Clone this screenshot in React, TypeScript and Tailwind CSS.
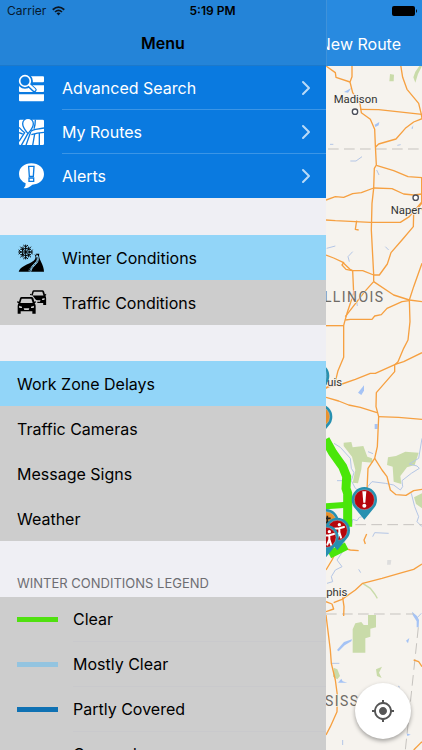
import { useState } from "react";
import { ChevronRight } from "lucide-react";
import { MdMyLocation } from "react-icons/md";

const roads = [
  "M12 18L40 38 42 52 84 66",
  "M90 15V50L84 66 92 98 114 130 118 158 145 178 158 208 160 256 163 315 157 325 155 385 150 430 148 510 155 643V665",
  "M114 148L170 149 300 163",
  "M236 15L242 52 255 88 290 130 298 163 300 176 275 186 250 205 222 237 170 252 160 262",
  "M163 316L215 332 258 350 300 353",
  "M12 420L40 410 65 412 92 401 118 398 155 384 210 386 245 402 275 405 300 402",
  "M12 480L40 482 145 487 235 487 262 470 300 425",
  "M104 482L100 508 110 510",
  "M299 352V430L275 460 274 500 240 540 207 578 196 612 172 645 155 645",
  "M12 585L35 594 65 608 60 615 72 628 90 632 122 632 155 645",
  "M62 607L84 628 92 632 95 700 75 760 68 785 65 797V892L48 932 40 965 12 985",
  "M155 665L128 695 70 770",
  "M155 665L215 705 262 720 300 725",
  "M12 797H66",
  "M70 780L85 778 150 778 158 768 178 764 195 745 240 725 262 722",
  "M300 610L275 680 262 720 264 785 258 840 245 865 228 905 218 915V935L163 998 162 1040 170 1070 166 1160 158 1195 138 1225 135 1290",
  "M300 878L245 905 220 913 160 940 145 940 100 958 60 972 12 982",
  "M12 1012L50 1023 80 1035 115 1042 165 1058",
  "M168 1070L230 1072 300 1078",
  "M158 1195L180 1230 195 1250 205 1290 222 1304 252 1306 275 1292 300 1288",
  "M68 1465L85 1470 110 1472",
  "M134 1422L126 1440 130 1452",
  "M12 1530L30 1500 36 1488",
  "M300 1512L275 1528 240 1538 180 1555 122 1570 100 1590 60 1618 35 1628",
  "M12 1625L30 1632 35 1647 12 1655",
  "M62 1612L66 1640 65 1668",
  "M12 1665L25 1770 28 1810 40 1860 46 1905 45 1955 25 2000 12 2025",
  "M275 1800L290 1805 300 1820",
  "M275 2070L300 2045",
];

const parks = [
  "M204 42L216 44 215 64 202 64Z",
  "M274 52L280 35 292 18 300 18 288 42 280 68Z",
  "M65 1148L88 1146 92 1162 124 1158 136 1190 150 1195 152 1208 120 1205 118 1228 108 1270 92 1268 100 1230 90 1190 65 1158Z",
  "M198 1192L222 1188 250 1175 290 1178 278 1215 255 1222 235 1248 238 1272 215 1265 212 1220 195 1215Z",
  "M276 1312L300 1300V1345L282 1332Z",
  "M92 1708L100 1690 118 1686 125 1695 138 1695V1665H162V1702L145 1706V1730L130 1735V1778H92Z",
  "M35 1823L46 1828 54 1848 46 1858 33 1850Z",
  "M162 1828L180 1820 171 1838 179 1854 165 1848Z",
];

const lakes = [
  "M66 96L88 84 78 98Z",
  "M158 194L172 186 170 196 160 201Z",
  "M268 205L274 196 272 207Z",
  "M108 998L126 976 126 992 118 1005Z",
  "M158 1092H167V1107H158Z",
  "M45 1770L66 1746 90 1738 88 1744 68 1756 50 1774Z",
  "M48 1868L58 1856 62 1864 76 1868Z",
  "M252 1742L262 1734 258 1750Z",
  "M254 2020L266 2024 256 2028Z",
  "M270 1655L285 1668 291 1680 290 1702 284 1702 284 1684 272 1665Z",
];

const rivers = [
  "M14 565L40 558",
  "M92 575L78 590 82 605",
  "M190 560L200 570",
  "M24 253H34M226 256L236 254",
  "M85 303L102 303 120 290",
  "M164 330L171 345",
  "M104 722L106 738",
  "M36 1150L55 1162 85 1195 88 1225 96 1238 88 1262 100 1285 120 1300 150 1265 190 1270 215 1275 235 1290 242 1280 240 1262 268 1240 292 1225 285 1218 262 1212 290 1195 300 1135",
  "M45 1262H62M138 1175L153 1181",
  "M268 1300L278 1340 290 1370 285 1385 300 1400",
  "M88 1400L92 1378 105 1382 112 1372 130 1368",
  "M62 1475L45 1500 60 1520 40 1530 28 1550 32 1565 15 1570",
  "M152 1430L158 1418 200 1420M110 1528L116 1538",
  "M30 1810H52M284 1675L298 1660M62 2040V2055M228 1878L234 1882",
];

function Pin({ x, y, fill, children }: { x: number; y: number; fill: string; children?: React.ReactNode }) {
  return (
    <g transform={`translate(${x} ${y})`}>
      <path d="M0 60L-27 27A38 38 0 1 1 27 27Z" fill="#2790b0" />
      <circle r="30" fill={fill} stroke="#d5d9dc" strokeWidth="1" />
      {children}
    </g>
  );
}

function Worker() {
  return (
    <g fill="none" stroke="#fff" strokeWidth="6" strokeLinecap="round">
      <circle cy="-17" r="5" fill="#fff" stroke="none" />
      <path d="M-15 -5L0 -6 14 -10M0 -6V8M0 6L-6 22M0 6L5 22" />
    </g>
  );
}

function RoadMap() {
  return (
    <svg
      className="block h-full w-full bg-[#f6f3ee] font-[Roboto,sans-serif]"
      viewBox="12 18 288 2052"
      preserveAspectRatio="xMinYMin slice"
      role="img"
      aria-label="Map"
    >
      <g fill="#c9dba9">
        {parks.map((d) => (
          <path key={d} d={d} />
        ))}
      </g>
      <path d="M122 1570L145 1585 158 1602 166 1615" fill="none" stroke="#c9dba9" strokeWidth="4" />
      <path d="M196 1500H208L206 1514H195Z" fill="#ddd" />
      <g fill="#a5c3f5">
        {lakes.map((d) => (
          <path key={d} d={d} />
        ))}
      </g>
      <g fill="none" stroke="#b4c6e6" strokeWidth="3">
        {rivers.map((d) => (
          <path key={d} d={d} />
        ))}
      </g>
      <g fill="none" stroke="#c6c3bf" strokeWidth="3" strokeDasharray="32 16">
        <path d="M18 267H300" />
        <path d="M100 1394H300" />
        <path d="M12 1662H275" />
        <path d="M289 1702L250 2070" />
      </g>
      <g fill="none" stroke="#f6a041" strokeWidth="4" strokeLinejoin="round">
        {roads.map((d) => (
          <path key={d} d={d} />
        ))}
      </g>
      <g fill="none" stroke="#4ae60a">
        <path d="M10 1138L32 1178 62 1220 74 1250 72 1285 77 1300V1400" strokeWidth="27" />
        <path d="M10 1339L76 1334" strokeWidth="18" />
        <path d="M22 1484L74 1458" strokeWidth="24" />
      </g>
      <g fill="#fff" stroke="#4b4e5a" strokeWidth="4">
        <circle cx="99" cy="155" r="8" />
        <circle cx="281" cy="413" r="8" />
      </g>
      <g fill="#333" stroke="#f6f3ee" strokeWidth="5" paintOrder="stroke" fontSize="34">
        <text x="35" y="129">Madison</text>
        <text x="206" y="462">Naperville</text>
        <text x="60" y="977" textAnchor="end">St. Louis</text>
        <text x="76" y="1609" textAnchor="end">Memphis</text>
      </g>
      <g className="tracking-widest" fill="#6f6b66" stroke="#f6f3ee" strokeWidth="4" paintOrder="stroke" fontSize="42">
        <text x="187" y="727" textAnchor="end">ILLINOIS</text>
        <text x="205" y="1938" textAnchor="end">MISSISSIPPI</text>
      </g>
      <Pin x={-16} y={947} fill="#2790b0" />
      <Pin x={-7} y={1070} fill="#e8912d" />
      <Pin x={12} y={1385} fill="#e8912d">
        <path d="M-4 -10H14M4 -18V6M-4 2H16" stroke="#222" strokeWidth="5" />
      </Pin>
      <Pin x={46} y={1411} fill="#b5060c">
        <g transform="translate(6 0)">
          <Worker />
        </g>
      </Pin>
      <Pin x={12} y={1432} fill="#b5060c">
        <g transform="translate(10 0)">
          <Worker />
        </g>
      </Pin>
      <Pin x={127} y={1319} fill="#b5060c">
        <path d="M-6 -25H6L3 9H-3Z" fill="#fff" />
        <circle cy="18" r="6" fill="#fff" />
      </Pin>
    </svg>
  );
}

function SearchListIcon() {
  return (
    <svg className="h-7 w-7" viewBox="51 16 84 84" aria-hidden="true">
      <g fill="#fff">
        <path d="M92 23H129Q132 23 132 26V38Q132 41 129 41H98Z" />
        <path d="M57 50H132V68Q132 70 129 70H60Q57 70 57 67Z" />
        <path d="M57 77H132V95Q132 98 129 98H60Q57 98 57 95Z" />
      </g>
      <g fill="none" stroke="#0a7ae0" strokeLinecap="round">
        <circle cx="75" cy="37" r="17" strokeWidth="13" />
        <path d="M88 50L103 64" strokeWidth="14" />
      </g>
      <circle cx="75" cy="37" r="16" fill="#0a7ae0" stroke="#fff" strokeWidth="5" />
      <path d="M88 49L103 63" stroke="#fff" strokeWidth="7" strokeLinecap="round" />
    </svg>
  );
}

function RoutesIcon() {
  return (
    <svg className="h-7 w-7" viewBox="51 152 84 84" aria-hidden="true">
      <rect x="57" y="157" width="75" height="76" rx="4" fill="#fff" />
      <g fill="none" stroke="#0a7ae0" strokeWidth="4">
        <path d="M57 180Q66 190 74 196L57 222" />
        <path d="M84 198L64 234M92 194L78 234" />
        <path d="M92 192Q98 188 107 186L132 182" />
        <path d="M94 202Q112 196 132 195" />
        <path d="M104 200L98 234M118 197V234" />
        <path d="M106 157Q106 172 102 184M57 196L68 200" />
      </g>
      <path d="M84 199Q68 180 68 169A16 16 0 0 1 100 169Q100 180 84 199Z" fill="#fff" stroke="#0a7ae0" strokeWidth="4" />
    </svg>
  );
}

function AlertIcon() {
  return (
    <svg className="h-7 w-7" viewBox="51 287 84 84" aria-hidden="true">
      <path d="M94 291C115 291 132 304 132 323S117 354 97 355Q86 366 71 366 78 360 77 351 57 342 57 323C57 304 73 291 94 291Z" fill="#fff" />
      <g fill="#fff" stroke="#0a7ae0" strokeWidth="4">
        <path d="M86 300H102L100 330H88Z" />
        <path d="M87 335H101V345H87Z" />
      </g>
    </svg>
  );
}

function WinterIcon() {
  return (
    <svg className="h-7 w-7" viewBox="51 38 84 84" aria-hidden="true">
      <g fill="none" stroke="#000" strokeWidth="3" strokeLinecap="round">
        <path d="M77 41V83M56 62H98M62 47L92 77M92 47L62 77" />
        <path d="M71 42L77 47 83 42M71 82L77 77 83 82M57 56L62 62 57 68M97 56L92 62 97 68" />
        <path d="M62 54L69 54 69 47M85 47L85 54 92 54M62 70L69 70 69 77M85 77L85 70 92 70" />
        <circle cx="77" cy="62" r="11" />
      </g>
      <path d="M56 121C60 105 84 100 101 88Q111 80 103 68 120 78 111 90C100 103 89 107 84 121Z" />
      <path d="M84 121C89 107 100 103 111 90Q117 78 107 67H118C113 82 132 98 132 121Z" />
      <path d="M90 121Q95 106 107 96 119 84 110 72" fill="none" stroke="#92d5f8" strokeWidth="6" />
      <path d="M90 121Q95 106 107 96 119 84 110 72" fill="none" stroke="#000" strokeWidth="2" strokeDasharray="7 4" />
    </svg>
  );
}

function Car() {
  return (
    <>
      <path d="M13 1H42Q46 1 48 5L51 15 55 13V18L52 20Q55 23 55 28V51H45V44H10V51H1V28Q1 23 4 20L0 18V13L5 15 8 5Q9 1 13 1Z" />
      <path d="M13 6H42L46 19H9Z" className="fill-[#cdcdcd]" />
      <path d="M5 27L14 30V34H6ZM50 27L41 30V34H49ZM19 35H36L34 40H21Z" className="fill-[#cdcdcd]" />
    </>
  );
}

function TrafficIcon() {
  return (
    <svg className="h-7 w-8" viewBox="50 174 96 84" aria-hidden="true">
      <g transform="translate(89 177) scale(.88)">
        <Car />
      </g>
      <g transform="translate(51 197)">
        <path d="M10 -4H45L54 8 60 12V55H-3V10Z" className="fill-[#cdcdcd]" />
        <Car />
      </g>
    </svg>
  );
}

const links = [
  { label: "Advanced Search", icon: <SearchListIcon /> },
  { label: "My Routes", icon: <RoutesIcon /> },
  { label: "Alerts", icon: <AlertIcon /> },
];

const modes = [
  { label: "Winter Conditions", icon: <WinterIcon /> },
  { label: "Traffic Conditions", icon: <TrafficIcon /> },
];

const layerNames = ["Work Zone Delays", "Traffic Cameras", "Message Signs", "Weather"];

const legend = [
  { label: "Clear", color: "bg-[#50e010]" },
  { label: "Mostly Clear", color: "bg-[#93c4e0]" },
  { label: "Partly Covered", color: "bg-[#0f71b3]" },
  { label: "Covered", color: "bg-[#cc66cc]" },
];

function StatusBar() {
  return (
    <div className="absolute inset-x-0 top-0 z-10 grid h-[22px] grid-cols-3 items-center pl-[7px] pr-1 text-xs text-black">
      <div className="flex items-center gap-[6px]">
        <span className="opacity-80">Carrier</span>
        <svg className="h-[10px] w-[13px]" viewBox="0 0 26 20" aria-label="Wi-Fi">
          <g fill="none" stroke="#0b1520" strokeWidth="3.4">
            <path d="M1.5 7.5Q13 -3 24.5 7.5" />
            <path d="M6 12Q13 5.500 20 12" />
          </g>
          <path d="M9 14.500Q13 11 17 14.500L13 19Z" fill="#0b1520" />
        </svg>
      </div>
      <span className="text-center font-semibold">5:19 PM</span>
      <svg className="h-[10px] w-[26px] justify-self-end" viewBox="0 0 26 10" aria-label="Battery full">
        <rect width="23" height="10" rx="2" />
        <path d="M24 3Q26 5 24 7Z" />
      </svg>
    </div>
  );
}

export default function App() {
  const [mode, setMode] = useState("Winter Conditions");
  const [layers, setLayers] = useState(["Work Zone Delays"]);

  const toggleLayer = (name: string) => {
    setLayers(layers.includes(name) ? layers.filter((l) => l !== name) : [...layers, name]);
  };

  return (
    <div className="relative flex h-screen overflow-hidden bg-[#efeff4] font-[Inter,sans-serif] text-base text-black">
      <StatusBar />

      <aside className="flex w-[326px] shrink-0 flex-col overflow-hidden">
        <header className="flex h-[66px] shrink-0 items-end justify-center border-b border-[#1c79cb] bg-[#2484d8]">
          <h1 className="pb-[10px] font-semibold">Menu</h1>
        </header>

        <nav className="shrink-0 bg-[#0a7ae0] text-white">
          {links.map((link, i) => (
            <a key={link.label} href="#" className="flex h-11 items-center pl-[17px]">
              <span className="w-[45px]">{link.icon}</span>
              <span
                className={
                  i < links.length - 1
                    ? "flex h-full flex-1 items-center justify-between border-b border-[#3b95e6] pr-2"
                    : "flex h-full flex-1 items-center justify-between pr-2"
                }
              >
                {link.label}
                <ChevronRight className="h-6 w-6 text-[#b9daf7]" strokeWidth={2} />
              </span>
            </a>
          ))}
        </nav>

        <div className="mt-[37px] shrink-0">
          {modes.map((m) => (
            <button
              key={m.label}
              type="button"
              aria-pressed={mode === m.label}
              onClick={() => setMode(m.label)}
              className={`flex h-[45px] w-full items-center pl-[17px] ${mode === m.label ? "bg-[#92d5f8]" : "bg-[#cdcdcd]"}`}
            >
              <span className="w-[45px]">{m.icon}</span>
              {m.label}
            </button>
          ))}
        </div>

        <div className="mt-9 shrink-0">
          {layerNames.map((name) => (
            <button
              key={name}
              type="button"
              aria-pressed={layers.includes(name)}
              onClick={() => toggleLayer(name)}
              className={`flex h-[45px] w-full items-center pl-[17px] ${layers.includes(name) ? "bg-[#92d5f8]" : "bg-[#cdcdcd]"}`}
            >
              {name}
            </button>
          ))}
        </div>

        <section className="shrink-0">
          <h2 className="flex h-14 items-end pb-1 pl-[17px] text-[13px] leading-5 text-[#6d6d72]">
            WINTER CONDITIONS LEGEND
          </h2>
          <ul className="bg-[#cdcdcd]">
            {legend.map((item) => (
              <li key={item.label} className="flex h-[45px] items-center gap-[15px] pl-[17px]">
                <span className={`h-[5px] w-[41px] ${item.color}`} />
                <span className="flex h-full flex-1 items-center border-b border-[#c9c9cc]">{item.label}</span>
              </li>
            ))}
          </ul>
        </section>
      </aside>

      <main className="flex min-w-0 flex-1 flex-col overflow-hidden">
        <header className="flex h-[66px] shrink-0 items-end justify-end overflow-hidden border-l border-[#3f92da] bg-[#288ae0] pr-[21px]">
          <button type="button" className="shrink-0 whitespace-nowrap pb-[10px] text-white">
            New Route
          </button>
        </header>
        <div className="relative min-h-0 flex-1">
          <RoadMap />
          <button
            type="button"
            aria-label="My location"
            className="absolute bottom-[11px] right-[11px] flex h-14 w-14 items-center justify-center rounded-full bg-white text-[#555] shadow-[0_2px_4px_rgba(0,0,0,0.35)]"
          >
            <MdMyLocation className="h-6 w-6" />
          </button>
        </div>
      </main>
    </div>
  );
}
